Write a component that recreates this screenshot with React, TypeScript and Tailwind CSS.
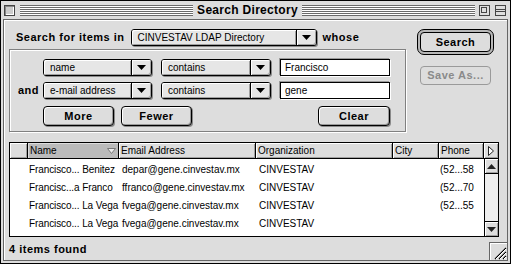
import * as React from "react"

const bevel = "shadow-[inset_1px_1px_0_#ffffff,inset_-1px_-1px_0_#a0a0a0]"

function Stripes() {
  return <div className="h-[11px] flex-1 bg-[image:repeating-linear-gradient(#6a6a6a_0_1px,#ffffff_1px_2px)]" />
}

function Popup({ label, className }: { label: string; className: string }) {
  return (
    <div className={`flex h-[17px] rounded-[3px] border border-black bg-[#e6e6e6] shadow-[1px_1px_0_#8a8a8a] ${className}`}>
      <div className={`flex flex-1 items-center truncate rounded-l-[2px] border-r border-black pl-[6px] text-[10px] ${bevel}`}>
        {label}
      </div>
      <div className={`flex w-[19px] items-center justify-center rounded-r-[2px] ${bevel}`}>
        <svg width="9" height="5" viewBox="0 0 9 5">
          <path d="M0 0h9L4.5 5z" fill="black" />
        </svg>
      </div>
    </div>
  )
}

function Button({ label, className }: { label: string; className: string }) {
  return (
    <div
      className={`flex h-[20px] items-center justify-center rounded-[4px] border border-black bg-[#dddddd] text-[11px] font-bold tracking-[0.5px] shadow-[inset_1px_1px_0_#ffffff,inset_-1px_-1px_0_#999999,1px_1px_0_#8a8a8a] ${className}`}
    >
      {label}
    </div>
  )
}

function Field({ value }: { value: string }) {
  return (
    <div className="flex h-[17px] w-[110px] items-center border border-black bg-white pl-[4px] text-[10px] shadow-[1px_1px_0_#ffffff,-1px_-1px_0_#9a9a9a]">
      {value}
    </div>
  )
}

function HeaderCell({ label, className, sorted }: { label?: string; className: string; sorted?: boolean }) {
  return (
    <div
      className={`flex h-full items-center border-r border-black pl-[2px] text-[10px] ${
        sorted ? "bg-[#bbbbbb] shadow-[inset_1px_1px_0_#dddddd]" : `bg-[#dddddd] ${bevel}`
      } ${className}`}
    >
      <span className="flex-1">{label}</span>
      {sorted ? (
        <svg width="9" height="6" viewBox="0 0 9 6" className="mr-[2px]">
          <path d="M0.5 0.5h8L4.5 5.5z" fill="#eeeeee" stroke="#777777" />
        </svg>
      ) : null}
    </div>
  )
}

const rows = [
  ["Francisco... Benitez", "depar@gene.cinvestav.mx", "CINVESTAV", "", "(52...58"],
  ["Francisc...a Franco", "ffranco@gene.cinvestav.mx", "CINVESTAV", "", "(52...70"],
  ["Francisco... La Vega", "fvega@gene.cinvestav.mx", "CINVESTAV", "", "(52...55"],
  ["Francisco... La Vega", "fvega@gene.cinvestav.mx", "CINVESTAV", "", ""],
]

function ArrowBox({ up, className }: { up?: boolean; className: string }) {
  return (
    <div className={`flex h-[15px] items-center justify-center bg-[#dddddd] ${bevel} ${className}`}>
      <svg width="9" height="5" viewBox="0 0 9 5">
        <path d={up ? "M0 5h9L4.5 0z" : "M0 0h9L4.5 5z"} fill="#222222" />
      </svg>
    </div>
  )
}

export default function App() {
  return (
    <div className="flex h-[264px] w-[511px] flex-col overflow-hidden border border-black bg-[#dddddd] font-['Liberation_Sans',Arial,sans-serif] text-black">
      {/* title bar */}
      <div className="flex h-[18px] items-center pl-[3px] pr-[4px]">
        <div className="h-[11px] w-[11px] border border-[#444444] bg-[#cccccc] shadow-[inset_1px_1px_0_#888888,inset_-1px_-1px_0_#ffffff]" />
        <div className="ml-[5px] flex flex-1 items-center">
          <Stripes />
          <span className="px-[4px] text-[12px] font-bold leading-none tracking-[0.3px]">Search Directory</span>
          <Stripes />
        </div>
        <div className="ml-[4px] flex h-[11px] w-[11px] items-start justify-start border border-[#444444] bg-[#dddddd] p-[1px]">
          <div className="h-[6px] w-[6px] border border-[#444444]" />
        </div>
        <div className="ml-[5px] flex h-[11px] w-[11px] flex-col justify-center border border-[#444444] bg-[#dddddd]">
          <div className="h-[3px] border-y border-[#444444]" />
        </div>
      </div>

      {/* content */}
      <div className="mx-[2px] mb-[2px] flex flex-1 flex-col border border-[#666666] shadow-[inset_1px_1px_0_#ffffff]">
        <div className="ml-[5px] mt-[9px] flex">
          <div className="flex w-[397px] flex-col">
            <div className="flex h-[17px] items-center pl-[7px]">
              <span className="text-[11px] font-bold tracking-[0.5px]">Search for items in</span>
              <Popup label="CINVESTAV LDAP Directory" className="ml-[6px] w-[186px]" />
              <span className="ml-[6px] text-[11px] font-bold tracking-[0.5px]">whose</span>
            </div>
            <div className="mt-[3px] flex h-[83px] flex-col border border-[#808080] pt-[9px] shadow-[inset_1px_1px_0_#ffffff,1px_1px_0_#ffffff]">
              <div className="flex items-center pl-[33px]">
                <Popup label="name" className="w-[109px]" />
                <Popup label="contains" className="ml-[9px] w-[110px]" />
                <div className="ml-[9px]">
                  <Field value="Francisco" />
                </div>
              </div>
              <div className="mt-[6px] flex items-center">
                <span className="w-[33px] pl-[8px] text-[11px] font-bold tracking-[0.5px]">and</span>
                <Popup label="e-mail address" className="w-[109px]" />
                <Popup label="contains" className="ml-[9px] w-[110px]" />
                <div className="ml-[9px]">
                  <Field value="gene" />
                </div>
              </div>
              <div className="mt-[7px] flex items-center pl-[33px]">
                <Button label="More" className="w-[71px]" />
                <Button label="Fewer" className="ml-[7px] w-[71px]" />
                <Button label="Clear" className="ml-[126px] w-[72px]" />
              </div>
            </div>
          </div>

          <div className="ml-[11px] flex flex-col">
            <div className="rounded-[7px] border border-black bg-[#b8b8b8] p-[2px]">
              <Button label="Search" className="w-[71px] shadow-none" />
            </div>
            <div className="ml-[3px] mt-[11px] flex h-[19px] w-[71px] items-center justify-center rounded-[4px] border border-[#9a9a9a] bg-[#dddddd] text-[11px] font-bold tracking-[0.5px] text-[#8a8a8a]">
              Save As...
            </div>
          </div>
        </div>

        {/* results list */}
        <div className="ml-[5px] mt-[10px] flex h-[95px] w-[490px] flex-col border border-black bg-white">
          <div className="flex h-[16px] border-b border-black">
            <HeaderCell className="w-[18px]" />
            <HeaderCell label="Name" sorted className="w-[91px]" />
            <HeaderCell label="Email Address" className="w-[137px]" />
            <HeaderCell label="Organization" className="w-[137px]" />
            <HeaderCell label="City" className="w-[46px]" />
            <HeaderCell label="Phone" className="w-[45px]" />
            <div className={`flex flex-1 items-center justify-center bg-[#dddddd] ${bevel}`}>
              <svg width="6" height="10" viewBox="0 0 6 10">
                <path d="M0.5 0.5v9l5-4.5z" fill="#ffffff" stroke="#222222" />
              </svg>
            </div>
          </div>
          <div className="flex flex-1">
            <div className="flex flex-1 flex-col pt-[1px]">
              {rows.map((r, i) => (
                <div key={i} className="flex h-[18px] items-center whitespace-nowrap text-[10px]">
                  <span className="ml-[19px] w-[91px] tracking-[-0.1px]">{r[0]}</span>
                  <span className="w-[137px] pl-[2px]">{r[1]}</span>
                  <span className="w-[137px] pl-[2px]">{r[2]}</span>
                  <span className="w-[46px]">{r[3]}</span>
                  <span className="w-[44px]">{r[4]}</span>
                </div>
              ))}
            </div>
            <div className="flex w-[14px] flex-col border-l border-black bg-[#eeeeee]">
              <ArrowBox up className="border-b border-black" />
              <div className="flex-1" />
              <ArrowBox className="border-t border-black" />
            </div>
          </div>
        </div>

        {/* status */}
        <div className="flex flex-1 items-end justify-between">
          <span className="mb-[3px] ml-[5px] text-[11px] font-bold tracking-[0.5px]">4 items found</span>
          <div className="flex h-[18px] w-[18px] items-end justify-end border-l border-t border-[#666666] bg-[#dddddd] shadow-[inset_1px_1px_0_#ffffff]">
            <svg width="16" height="16" viewBox="0 0 16 16">
              <path d="M15 4L4 15M15 8L8 15M15 12L12 15" stroke="#000000" strokeWidth="1.2" />
              <path d="M15 5L5 15M15 9L9 15M15 13L13 15" stroke="#ffffff" strokeWidth="1" />
            </svg>
          </div>
        </div>
      </div>
    </div>
  )
}
